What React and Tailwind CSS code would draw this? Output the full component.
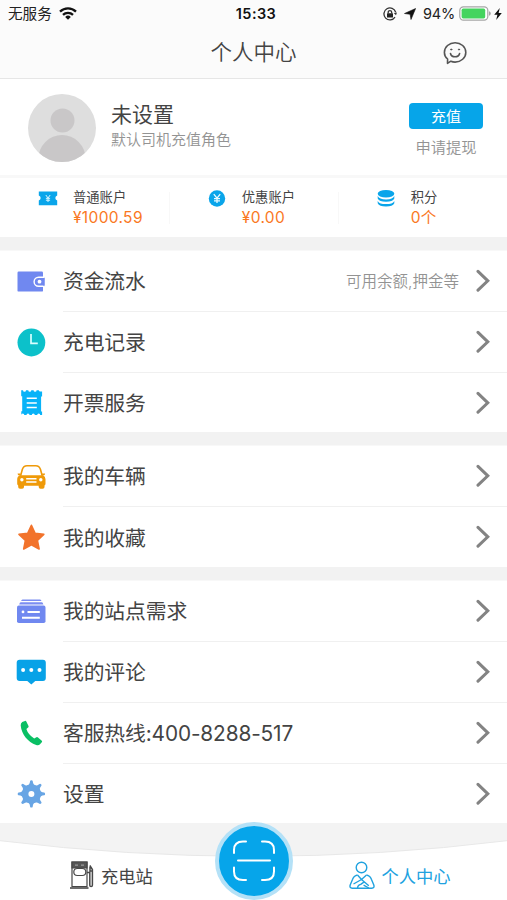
import { Fragment } from 'react';

const WifiIcon = () => (
    <svg viewBox="0 0 18 13" className="ml-[7px] h-[13px] w-[18px]" fill="none" stroke="#111" strokeWidth="2.3">
        <path d="M1 4.6a11.6 11.6 0 0 1 16 0M4 7.8a7.2 7.2 0 0 1 10 0" />
        <path d="M9 12.7 6.2 9.9a4 4 0 0 1 5.6 0Z" fill="#111" stroke="none" />
    </svg>
);

const StatusBar = () => (
    <div className="grid h-[27px] grid-cols-3 items-center text-[14px] text-[#222]">
        <div className="flex items-center pl-[8px]">
            <span className="pt-[3px] text-[14.6px]">无服务</span>
            <WifiIcon />
        </div>
        <span className="pl-[5px] text-center text-[14.5px] font-semibold tracking-[0.4px] text-[#111]">
            15:33
        </span>
        <div className="flex items-center justify-end pr-[5px]">
            <svg viewBox="0 0 14 14" className="h-[14px] w-[14px]" fill="none" stroke="#333" strokeWidth="1.3">
                <path d="M12.7 5.2A6 6 0 1 0 12 10.2" />
                <path d="m10.8 6 2.2 2.2L14 5.5Z" fill="#333" stroke="none" />
                <rect x="4" y="6.2" width="6" height="4.2" rx=".5" fill="#222" stroke="none" />
                <path d="M5.2 6.5V5.3a1.7 1.7 0 0 1 3.5 0v1.2" />
            </svg>
            <svg viewBox="0 0 12 12" className="ml-[7px] h-[12px] w-[12px]" fill="#111" stroke="#111" strokeWidth=".6">
                <path d="M11.6.5 7 11.5 6.1 6.3.5 5.5Z" />
            </svg>
            <span className="ml-[7px] w-[32px] text-[14.5px] tracking-[-0.2px] whitespace-nowrap">94%</span>
            <svg viewBox="0 0 32 15" className="ml-[4px] h-[15px] w-[32px]">
                <rect x=".8" y=".8" width="28" height="13.4" rx="3.6" fill="#fff" stroke="#a5a5a5" strokeWidth="1.2" />
                <rect x="2.6" y="2.6" width="23.6" height="9.8" rx="1.6" fill="#44d45e" />
                <path d="M30 5.2q1.8.6 1.8 2.3T30 9.8Z" fill="#a5a5a5" />
            </svg>
            <svg viewBox="0 0 8 12" className="ml-[3px] h-[12px] w-[8px]" fill="#111">
                <path d="M5.8 0 .2 6.8h3.2L2.2 12l5.6-7H4.6Z" />
            </svg>
        </div>
    </div>
);

const Header = () => (
    <header className="h-[79px] border-b border-[#e6e6e6] bg-[#fbfbfb]">
        <StatusBar />
        <div className="grid h-[51px] grid-cols-3 items-center">
            <span />
            <h1 className="text-center text-[21.5px] font-[350] text-[#444]">个人中心</h1>
            <svg
                viewBox="0 0 24 24"
                className="mr-[40px] h-[24px] w-[24px] justify-self-end"
                fill="none"
                stroke="#555"
                strokeWidth="1.6"
                strokeLinecap="round"
                strokeLinejoin="round"
            >
                <path d="M4.6 18C2.6 16.4 1.4 14 1.4 11.4 1.4 6 6.2 1.7 12.1 1.7s10.7 4.3 10.7 9.7-4.8 9.7-10.7 9.7c-1.6 0-3-.3-4.3-.9L4.5 22.3Z" />
                <path d="M7.5 12.500c1 4.400 8 4.400 9.100 0" />
                <circle cx="8.2" cy="8.5" r=".6" fill="#555" strokeWidth="1" />
                <circle cx="16" cy="8.5" r=".6" fill="#555" strokeWidth="1" />
            </svg>
        </div>
    </header>
);

const Profile = () => (
    <section className="flex h-[99px] border-b-[3px] border-[#f8f8f8] pl-[28px]">
        <svg viewBox="0 0 68 68" className="mt-[15px] h-[68px] w-[68px] overflow-hidden rounded-full">
            <rect width="68" height="68" fill="#dedede" />
            <circle cx="34.5" cy="26.5" r="12" fill="#c9c7c8" />
            <circle cx="34" cy="64.5" r="23.5" fill="#c9c7c8" />
        </svg>
        <div className="mt-[22px] ml-[15px]">
            <h2 className="text-[21px] leading-[28px] text-[#444]">未设置</h2>
            <p className="mt-px text-[15px] leading-[20px] font-[350] text-[#939393]">默认司机充值角色</p>
        </div>
        <div className="mt-[24px] mr-[24px] ml-auto flex w-[74px] flex-col items-center">
            <button className="h-[26px] w-full rounded-[4px] bg-[#06a5e9] pt-px text-[15px] leading-[26px] text-white">
                充值
            </button>
            <span className="mt-[9px] text-[15.3px] leading-[20px] font-[350] whitespace-nowrap text-[#939393]">
                申请提现
            </span>
        </div>
    </section>
);

const TicketIcon = () => (
    <svg viewBox="0 0 20 20" className="h-[20px] w-[20px]">
        <path d="M.8 3.500H19.200v4.100a2.600 2.600 0 0 0 0 5v4.600H.8v-4.600a2.600 2.600 0 0 0 0-5Z" fill="#0aa5ea" />
        <path d="m7.8 7 2.200 3 2.200-3M10 10v4M7.900 10.300h4.200M7.900 12.200h4.200" fill="none" stroke="#d9f5ff" />
    </svg>
);

const YuanIcon = () => (
    <svg viewBox="0 0 20 20" className="h-[20px] w-[20px]">
        <circle cx="10" cy="10.5" r="8.2" fill="#0aa5ea" />
        <path d="m6.8 6.200 3.200 4 3.200-4M10 10v5M7 10.600h6M7 12.900h6" fill="none" stroke="#e9faff" strokeWidth="1.3" />
    </svg>
);

const CoinsIcon = () => (
    <svg viewBox="0 0 20 20" className="h-[20px] w-[20px]" fill="#0aa5ea">
        <ellipse cx="10" cy="5.7" rx="8.3" ry="3.8" />
        <path d="M1.700 8q1.600 3.300 8.300 3.400T18.300 8v2.500q-1.600 3.200-8.300 3.200t-8.300-3.200Z" />
        <path d="M1.700 12.900q1.600 3.200 8.300 3.200t8.300-3.200v2.300q-1.600 3.200-8.300 3.200t-8.300-3.200Z" />
    </svg>
);

const stats = [
    { label: '普通账户', value: '¥1000.59', Icon: TicketIcon },
    { label: '优惠账户', value: '¥0.00', Icon: YuanIcon },
    { label: '积分', value: '0个', Icon: CoinsIcon },
];

const Stats = () => (
    <section className="flex h-[59px] items-center">
        {stats.map(({ label, value, Icon }, i) => (
            <Fragment key={label}>
                {i > 0 && <div className="h-[32px] w-px bg-[#f8f8f8]" />}
                <div className={`flex flex-1 ${i > 0 ? 'pl-[36.5px]' : 'pl-[38px]'}`}>
                    <div className="pt-px">
                        <Icon />
                    </div>
                    <div className="ml-[15px]">
                        <p className="text-[13.3px] leading-[20px] text-[#444]">{label}</p>
                        <p className="text-[15.5px] leading-[21px] tracking-[0.35px] text-[#fa781e]">{value}</p>
                    </div>
                </div>
            </Fragment>
        ))}
    </section>
);

const WalletIcon = () => (
    <svg viewBox="0 0 30 30" className="h-[30px] w-[30px]">
        <rect x="1.5" y="4.6" width="25.5" height="20" rx="1.2" fill="#7088f0" />
        <path d="M28.500 10.200H22.600a4.500 4.500 0 0 0 0 9h5.900" fill="#7088f0" stroke="#fff" strokeWidth="1.4" />
        <path d="M27 10.900h1.500v7.600H27Z" fill="#7088f0" />
        <circle cx="23.5" cy="14.7" r="1.9" fill="#fff" />
    </svg>
);

const ClockIcon = () => (
    <svg viewBox="0 0 30 30" className="h-[30px] w-[30px]">
        <circle cx="15.4" cy="14.5" r="13.9" fill="#0cc1ca" />
        <path d="M15 6v9.300h6.800" fill="none" stroke="#d9ffff" strokeWidth="1.7" />
    </svg>
);

const InvoiceIcon = () => (
    <svg viewBox="0 0 30 30" className="h-[30px] w-[30px]">
        <path
            d="M5.200 2.200H7a1.500 1.500 0 0 0 3 0h2.300a1.500 1.500 0 0 0 3 0h2.300a1.500 1.500 0 0 0 3 0h2.200a1.500 1.500 0 0 0 1.500 1.300h1.800v5h-1v15h1v3.500H24.200a1.500 1.500 0 0 0-3 0H18.800a1.500 1.500 0 0 0-3 0h-2.300a1.500 1.500 0 0 0-3 0H8.300a1.500 1.500 0 0 0-3 0V23.300h.9v-15h-1Z"
            fill="#08b3f8"
        />
        <path d="M10.700 10.200h10.100M10.700 14.900h10.100M10.700 19.600h10.100" stroke="#fff" strokeWidth="1.5" />
    </svg>
);

const CarIcon = () => (
    <svg viewBox="0 0 30 30" className="h-[30px] w-[30px]">
        <path
            d="M4.600 13.800 6.300 7.600Q7.500 3.800 11 3.800h8.800q3.500 0 4.700 3.800l1.700 6.200"
            fill="none"
            stroke="#ef9a09"
            strokeWidth="1.6"
        />
        <path
            d="M4 13.200h22.800q2.700 1 2.700 4v4.500q0 1.300-1 1.700v1.600q0 1.800-1.800 1.800h-2.200q-1.800 0-1.800-1.800v-1.200H8V25q0 1.800-1.800 1.800H4q-1.800 0-1.800-1.800v-1.600q-1-.4-1-1.700v-4.500q0-3 2.800-4Z"
            fill="#ef9a09"
        />
        <path d="M1.600 11.500h3v2H2.800q-1.200-.3-1.200-2ZM29.100 11.500h-3v2h1.800q1.200-.3 1.200-2Z" fill="#ef9a09" />
        <circle cx="5.9" cy="17.8" r="1.7" fill="#fff" />
        <circle cx="24.8" cy="17.8" r="1.7" fill="#fff" />
        <path d="M10.200 16.800h10.300M10.200 20h10.300" stroke="#fff" strokeWidth="1.4" />
    </svg>
);

const StarIcon = () => (
    <svg viewBox="0 0 30 30" className="h-[30px] w-[30px]">
        <path
            d="m15.400 3.300 3.700 8 8.700 1-6.400 6.100 1.700 8.600-7.700-4.200-7.700 4.200 1.700-8.600-6.400-6.100 8.700-1Z"
            fill="#f2732b"
            stroke="#f2732b"
            strokeWidth="1.6"
            strokeLinejoin="round"
        />
    </svg>
);

const StationIcon = () => (
    <svg viewBox="0 0 30 30" className="h-[30px] w-[30px]">
        <path d="M6.500 2.400h17.600q1 0 1.400 1.500H5.100q.4-1.500 1.400-1.500ZM4.800 5.200h21q1.100 0 1.600 2.300H3.200q.5-2.300 1.600-2.300Z" fill="#7b8df2" />
        <rect x="1" y="8.6" width="28.5" height="17.5" rx="1.8" fill="#7088f0" />
        <path d="M11.500 14.900h12.300M6 20.700h17.800" stroke="#fff" strokeWidth="2" />
        <circle cx="7" cy="14.9" r="1.4" fill="#fff" />
    </svg>
);

const CommentIcon = () => (
    <svg viewBox="0 0 30 30" className="h-[30px] w-[30px]">
        <path
            d="M3.600 1.700h23.300q2.900 0 2.900 2.900v15.400q0 2.900-2.900 2.900h-7.600l-4 3.500-4-3.500H3.600q-2.900 0-2.900-2.900V4.600q0-2.900 2.900-2.900Z"
            fill="#08a2e7"
        />
        <circle cx="7.1" cy="12.1" r="2" fill="#fff" />
        <circle cx="15.3" cy="12.1" r="2" fill="#fff" />
        <circle cx="23.5" cy="12.1" r="2" fill="#fff" />
    </svg>
);

const PhoneIcon = () => (
    <svg viewBox="0 0 30 30" className="h-[30px] w-[30px]">
        <path
            d="M6.200 3 9 1.900q.9-.2 1.300.6l2.200 4.500q.4 1-.4 1.600l-1.700 1.300q1.600 5.400 7.800 9.600l2.200-1.200q.9-.5 1.600.2l3.800 3.200q.7.800 0 1.600l-1.800 2q-1.200 1.300-3.800.7C11.800 23.200 5.500 15.400 4.700 6.600q-.1-2.600 1.500-3.600Z"
            fill="#0abf64"
        />
    </svg>
);

const GearIcon = () => (
    <svg viewBox="0 0 30 30" className="h-[30px] w-[30px]">
        <g fill="#68a5e4">
            {[0, 45, 90, 135, 180, 225, 270, 315].map((deg) => (
                <path key={deg} d="M10.800 7.200q3-1.200 3.300-5.100.2-.9 1.300-.9t1.300.9q.3 3.900 3.300 5.100Z" transform={`rotate(${deg} 15.4 14.9)`} />
            ))}
            <circle cx="15.4" cy="14.9" r="9.6" />
        </g>
        <circle cx="15.4" cy="14.9" r="3" fill="#fff" />
    </svg>
);

const groups = [
    [
        { label: '资金流水', Icon: WalletIcon, hint: '可用余额,押金等' },
        { label: '充电记录', Icon: ClockIcon },
        { label: '开票服务', Icon: InvoiceIcon, height: 'h-[59px]' },
    ],
    [
        { label: '我的车辆', Icon: CarIcon },
        { label: '我的收藏', Icon: StarIcon, height: 'h-[60px]' },
    ],
    [
        { label: '我的站点需求', Icon: StationIcon },
        { label: '我的评论', Icon: CommentIcon },
        { label: '客服热线:400-8288-517', Icon: PhoneIcon },
        { label: '设置', Icon: GearIcon, height: 'h-[59px]' },
    ],
];

const MenuRow = ({ label, Icon, hint, height }) => (
    <li className={`flex ${height || 'h-[61px]'}`}>
        <div className="flex w-[63px] items-center pl-[16px]">
            <Icon />
        </div>
        <div className={`flex flex-1 items-center ${height ? '' : 'border-b border-[#f0f0f0]'}`}>
            <span className={`text-[20.8px] tracking-[-0.12px] whitespace-nowrap text-[#444] ${height ? 'pt-[3px]' : 'pt-[2px]'}`}>
                {label}
            </span>
            {hint && <span className="ml-auto pt-[2px] text-[15.5px] font-[350] text-[#939393]">{hint}</span>}
            <svg
                viewBox="0 0 14 24"
                className={`mr-[17px] h-[24px] w-[14px] ${hint ? 'ml-[17px]' : 'ml-auto'}`}
                fill="none"
                stroke="#838383"
                strokeWidth="3"
                strokeLinecap="round"
            >
                <path d="m2 2.400 9.800 9.400L2 21.200" />
            </svg>
        </div>
    </li>
);

const PumpIcon = () => (
    <svg viewBox="0 0 26 28" className="h-[28px] w-[26px]" fill="none" stroke="#484848" strokeWidth="1.2">
        <path d="M3 1h15v24.500H3Z" />
        <path d="M3 1h15v6H3Z" fill="#555" />
        <path d="M6 4.200h3M12 4.200h3" stroke="#999" />
        <rect x="4.8" y="7.5" width="12" height="7" rx="3.5" fill="#fff" />
        <path d="M1 27h18.500" strokeWidth="1.6" />
        <path d="M18 11.500h2.800v12.700q0 1.300 1.300 1.300t1.300-1.300V8.500L20.800 4.500M21 6v4h2.400" strokeWidth="1.5" />
    </svg>
);

const PersonIcon = () => (
    <svg viewBox="0 0 26 28" className="h-[28px] w-[26px]" fill="none" stroke="#20a2df" strokeWidth="1.4" strokeLinejoin="round">
        <circle cx="12.5" cy="6.5" r="5.3" />
        <path d="M8.500 14q-3.800.8-5 4.500L1.200 24q-.9 3.200 2 3.200h19.600q2.900 0 2-3.200L22.500 18.500q-1.200-3.700-5-4.500" />
        <path d="m8.500 14 4 4.500 5-4.500M4.500 23l8-4.500 7.300 6.200M8.500 27q.2-3 3.200-3.600l3.500-2.500M14.600 24.200l5.200 2.800" />
    </svg>
);

const TabBar = () => (
    <nav className="relative flex h-[77px] flex-col bg-[#f3f3f3]">
        <svg viewBox="0 0 507 60" className="absolute top-[17px] left-0 h-[60px] w-full" preserveAspectRatio="none">
            <path d="M0 .7Q253.500 32 507 .7V60H0Z" fill="#fff" />
            <path d="M0 .7Q253.500 32 507 .7" fill="none" stroke="#e8e8e8" />
        </svg>
        <div className="relative mt-[37px] flex h-[30px] items-center">
            <div className="flex w-1/2 items-center pl-[69px]">
                <PumpIcon />
                <span className="ml-[6px] pt-[3px] text-[17.3px] text-[#444]">充电站</span>
            </div>
            <div className="flex w-1/2 items-center pl-[95px]">
                <PersonIcon />
                <span className="ml-[7px] pt-[3px] text-[17.3px] text-[#20a2df]">个人中心</span>
            </div>
        </div>
        <button className="absolute top-[-1px] left-[215px] flex h-[78px] w-[78px] items-center justify-center rounded-full border-[4px] border-[#b4e1f7] bg-[#06a5ea]">
            <svg viewBox="0 0 44 44" className="h-[44px] w-[44px]" fill="none" stroke="#fff" strokeWidth="2" strokeLinecap="round">
                <path d="M14 2.500H11Q2 2.500 2 11v3M30 2.500h3q9 0 9 8.500v3M14 41h-3q-9 0-9-8.500v-4M30 41h3q9 0 9-8.500v-4M6 21.500h32" />
            </svg>
        </button>
    </nav>
);

export default function App() {
    return (
        <div className="h-[900px] w-[507px] overflow-hidden bg-white font-[Inter,'Noto_Sans_CJK_SC',sans-serif]">
            <Header />
            <Profile />
            <Stats />
            {groups.map((items) => (
                <section key={items[0].label}>
                    <div className="h-[14px] border-b border-[#f8f8f8] bg-[#f2f2f2]" />
                    <ul>
                        {items.map((item) => (
                            <MenuRow key={item.label} {...item} />
                        ))}
                    </ul>
                </section>
            ))}
            <TabBar />
        </div>
    );
}
